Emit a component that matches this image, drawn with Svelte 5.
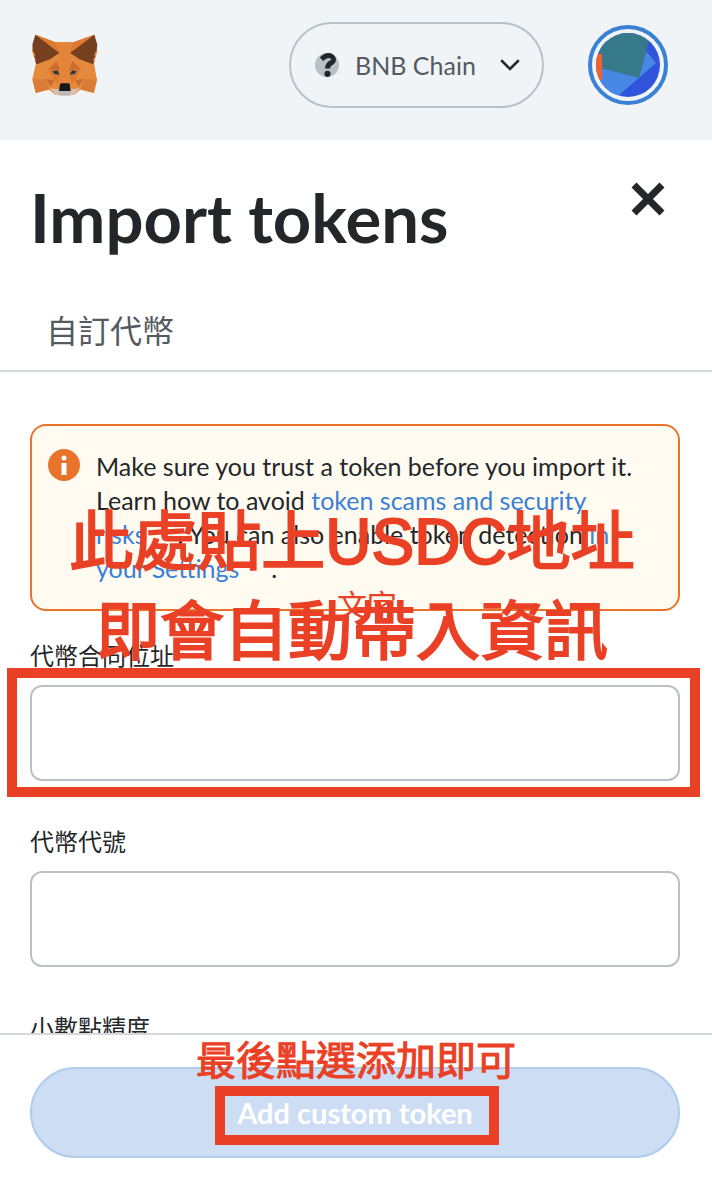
<script lang="ts">
  interface Field {
    id: string;
    label: string;
    marked?: boolean;
  }

  const fields: Field[] = [
    { id: "token-address", label: "代幣合同位址", marked: true },
    { id: "token-symbol", label: "代幣代號" },
    { id: "token-decimals", label: "小數點精度" },
  ];

  let values = $state<Record<string, string>>({
    "token-address": "",
    "token-symbol": "",
    "token-decimals": "",
  });
</script>

<div class="popup">
  <header class="bar">
    <svg class="fox" viewBox="33 42 201 186" aria-hidden="true">
      <path fill="#e58a3c" d="M46 44 107 67h53l63-23 9 50-10 36 9 50-9 39-42-10-17 15h-58l-17-15-41 10-10-41 11-49L36 93z" />
      <path fill="#db7a30" d="m46 44 61 23 12 32zM223 44l-63 23-11 32z" />
      <path fill="#e2853a" d="M107 67h53l-11 32 5 36-10 57h-22l-9-57 6-36z" />
      <path fill="#753f20" d="m46 44 72 55-28 19-40 15-4-7 1-9-4-6 2-8-6-10-2-19zM223 44l-73 55 29 19 40 15 3-7-2-9 5-6-2-8 6-10 3-19z" />
      <path fill="#d97c38" d="M37 178h40l9 28-38 13zM231 178h-40l-8 28 38 13z" />
      <path fill="#c9682f" d="m77 177 25 4-9 18zM191 177l-25 4 9 18z" />
      <path fill="#cd6a30" d="m84 149 26-27 10 27zM183 149l-26-27-9 27z" />
      <path fill="#dc7a34" d="m84 149 36 0-6 43-12-11zM183 149h-35l6 43 12-11z" />
      <path fill="#2d3845" d="m97 154 15-3 7 13-16-2zM170 154l-14-3-7 13 15-2z" />
      <path fill="#d9bfb2" d="m90 205 27 3 5 5h24l5-5 28-3-16 18-12 4h-34l-12-4z" />
      <path fill="#bdb8b8" d="m112 211 8 3h28l8-3-5 11-5 4h-24l-5-4z" />
      <path fill="#18191c" d="m120 192 4-2h22l3 2 3 21h-35z" />
    </svg>
    <button type="button" class="network">
      <svg class="unknown" viewBox="0 0 24 24" aria-hidden="true">
        <circle cx="12" cy="12" r="12" fill="#bbc0c5" />
        <path d="M6.500 6.200Q12 1 16.500 3.300Q20.500 6 17 9.300Q12.500 11.500 12.500 15.500" fill="none" stroke="#24272a" stroke-width="5" />
        <circle cx="12.500" cy="20.800" r="3.100" fill="#24272a" />
      </svg>
      <span>BNB Chain</span>
      <svg class="chevron" viewBox="0 0 20 12" aria-hidden="true">
        <path d="m2 2 8 8 8-8" fill="none" stroke="#24272a" stroke-width="2.600" stroke-linecap="round" />
      </svg>
    </button>
    <button type="button" class="account" aria-label="Account">
      <svg viewBox="0 0 64 64" aria-hidden="true">
        <clipPath id="face"><circle cx="32" cy="32" r="32" /></clipPath>
        <g clip-path="url(#face)">
          <path fill="#3154dc" d="M0 0h64v64H0z" />
          <path fill="#4788e5" d="M-5 30 49 17l11 13-38 33-27 8z" />
          <path fill="#36798b" d="M6-3h50L43 45 0 34z" />
          <path fill="#f15f32" d="M0 21h6v26H0z" />
        </g>
      </svg>
    </button>
  </header>

  <main class="content">
    <div class="heading">
      <h1>Import tokens</h1>
      <button type="button" class="close" aria-label="Close">
        <svg viewBox="0 0 34 34" aria-hidden="true">
          <path d="m3 3 28 28M31 3 3 31" fill="none" stroke="#24272a" stroke-width="7" />
        </svg>
      </button>
    </div>

    <nav class="tabs">
      <button type="button" class="tab">自訂代幣</button>
    </nav>

    <div class="form">
      <div class="alert">
        <svg class="info" viewBox="0 0 32 32" aria-hidden="true">
          <circle cx="16" cy="16" r="16" fill="#e8742b" />
          <circle cx="16" cy="9" r="2.500" fill="#fff" />
          <path fill="#fff" d="M13.500 14h5v12h-5z" />
        </svg>
        <p>
          Make sure you trust a token before you import it.<br />
          Learn how to avoid <a href="#scams">token scams and security<br />risks</a>. You can also enable token detection
          <a href="#settings">in<br />your Settings</a>.
        </p>
      </div>

      {#each fields as field (field.id)}
        <div class="field">
          <label for={field.id}>{field.label}</label>
          <div class="control">
            <input id={field.id} type="text" bind:value={values[field.id]} />
            {#if field.marked}
              <div class="frame"></div>
              <p class="note">此處貼上USDC地址<br />即會自動帶入資訊</p>
              <p class="note small">文字</p>
            {/if}
          </div>
        </div>
      {/each}
    </div>
  </main>

  <footer class="actions">
    <p class="note hint">最後點選添加即可</p>
    <button type="button" class="submit">
      <span class="caption">Add custom token<span class="frame"></span></span>
    </button>
  </footer>
</div>

<style>
  :global(body) {
    margin: 0;
    background: #fff;
  }

  .popup {
    --text: #24272a;
    --muted: #535a61;
    --line: #d6d9dc;
    --mark: #ea4025;
    display: flex;
    flex-direction: column;
    height: 100vh;
    overflow: hidden;
    color: var(--text);
    font-family: Lato, "Noto Sans CJK TC", sans-serif;
    font-size: 25px;
    line-height: 34px;
  }

  .popup * {
    box-sizing: border-box;
  }

  button {
    padding: 0;
    border: none;
    background: transparent;
    color: inherit;
    font: inherit;
    cursor: pointer;
  }

  svg {
    display: block;
    flex: none;
  }

  .bar {
    display: flex;
    align-items: center;
    flex: none;
    gap: 44px;
    padding: 22px 44px 32px 31px;
    background: #f1f4f7;
  }

  .fox {
    width: 67px;
    margin-right: auto;
  }

  .network {
    display: flex;
    align-items: center;
    gap: 16px;
    height: 86px;
    min-width: 255px;
    padding: 0 22px 0 24px;
    border: 2px solid #bbc0c5;
    border-radius: 43px;
    color: var(--muted);
  }

  .unknown {
    width: 24px;
    overflow: visible;
  }

  .chevron {
    width: 20px;
    margin-left: auto;
  }

  .account {
    width: 80px;
    height: 80px;
    padding: 4px;
    border: 4px solid #3a80d5;
    border-radius: 50%;
  }

  .content {
    flex: 1;
    min-height: 0;
    overflow: hidden;
  }

  .heading {
    display: flex;
    justify-content: space-between;
    align-items: flex-start;
    padding: 42px 47px 0 30px;
  }

  h1 {
    margin: 0;
    font-size: 67px;
    font-weight: 700;
    line-height: 70px;
  }

  .close svg {
    width: 34px;
  }

  .tabs {
    display: flex;
    margin-top: 38px;
    padding: 0 30px;
    border-bottom: 2px solid var(--line);
  }

  .tab {
    padding: 17px 16px 15px;
    color: var(--muted);
    font-size: 32px;
    line-height: 48px;
  }

  .form {
    padding: 52px 32px 0 30px;
  }

  .alert {
    display: flex;
    align-items: flex-start;
    gap: 16px;
    margin-bottom: 28px;
    padding: 23px 16px 24px;
    border: 2px solid #e8742b;
    border-radius: 16px;
    background: #fffbf0;
  }

  .info {
    width: 32px;
  }

  .alert p {
    margin: 0;
    white-space: nowrap;
  }

  a {
    padding-right: 32px;
    color: #3a80d5;
    text-decoration: none;
  }

  .field {
    display: flex;
    flex-direction: column;
    gap: 12px;
    margin-bottom: 44px;
  }

  label {
    font-size: 24px;
  }

  .control {
    position: relative;
  }

  input {
    display: block;
    width: 100%;
    height: 96px;
    padding: 0 24px;
    border: 2px solid #bbc0c5;
    border-radius: 12px;
    background: #fff;
    color: inherit;
    font: inherit;
  }

  /* red guide marks drawn over the form */
  .frame {
    position: absolute;
    inset: -17px -20px -16px -23px;
    border: 10px solid var(--mark);
    pointer-events: none;
  }

  .note {
    position: absolute;
    right: 6px;
    bottom: 104px;
    left: 0;
    margin: 0;
    color: var(--mark);
    font-family: "Liberation Sans", "Noto Sans CJK TC", sans-serif;
    font-size: 64px;
    line-height: 90px;
    text-align: center;
    white-space: nowrap;
    pointer-events: none;
    -webkit-text-stroke: 2px var(--mark);
  }

  .small {
    left: 30px;
    bottom: 157px;
    font-size: 30px;
    line-height: 36px;
    -webkit-text-stroke: 0;
  }

  .actions {
    position: relative;
    flex: none;
    padding: 32px 32px 30px 30px;
    border-top: 2px solid var(--line);
    background: #fff;
  }

  .hint {
    top: 2px;
    right: 0;
    bottom: auto;
    font-size: 40px;
    line-height: 48px;
    z-index: 1;
    -webkit-text-stroke: 1px var(--mark);
  }

  .submit {
    width: 100%;
    height: 91px;
    border: 2px solid #b0cdec;
    border-radius: 46px;
    background: #cdddf4;
    color: #fff;
    font-size: 29px;
    font-weight: 700;
  }

  .caption {
    position: relative;
    display: inline-block;
  }

  .caption .frame {
    inset: -10px -26px -15px -22px;
  }
</style>
